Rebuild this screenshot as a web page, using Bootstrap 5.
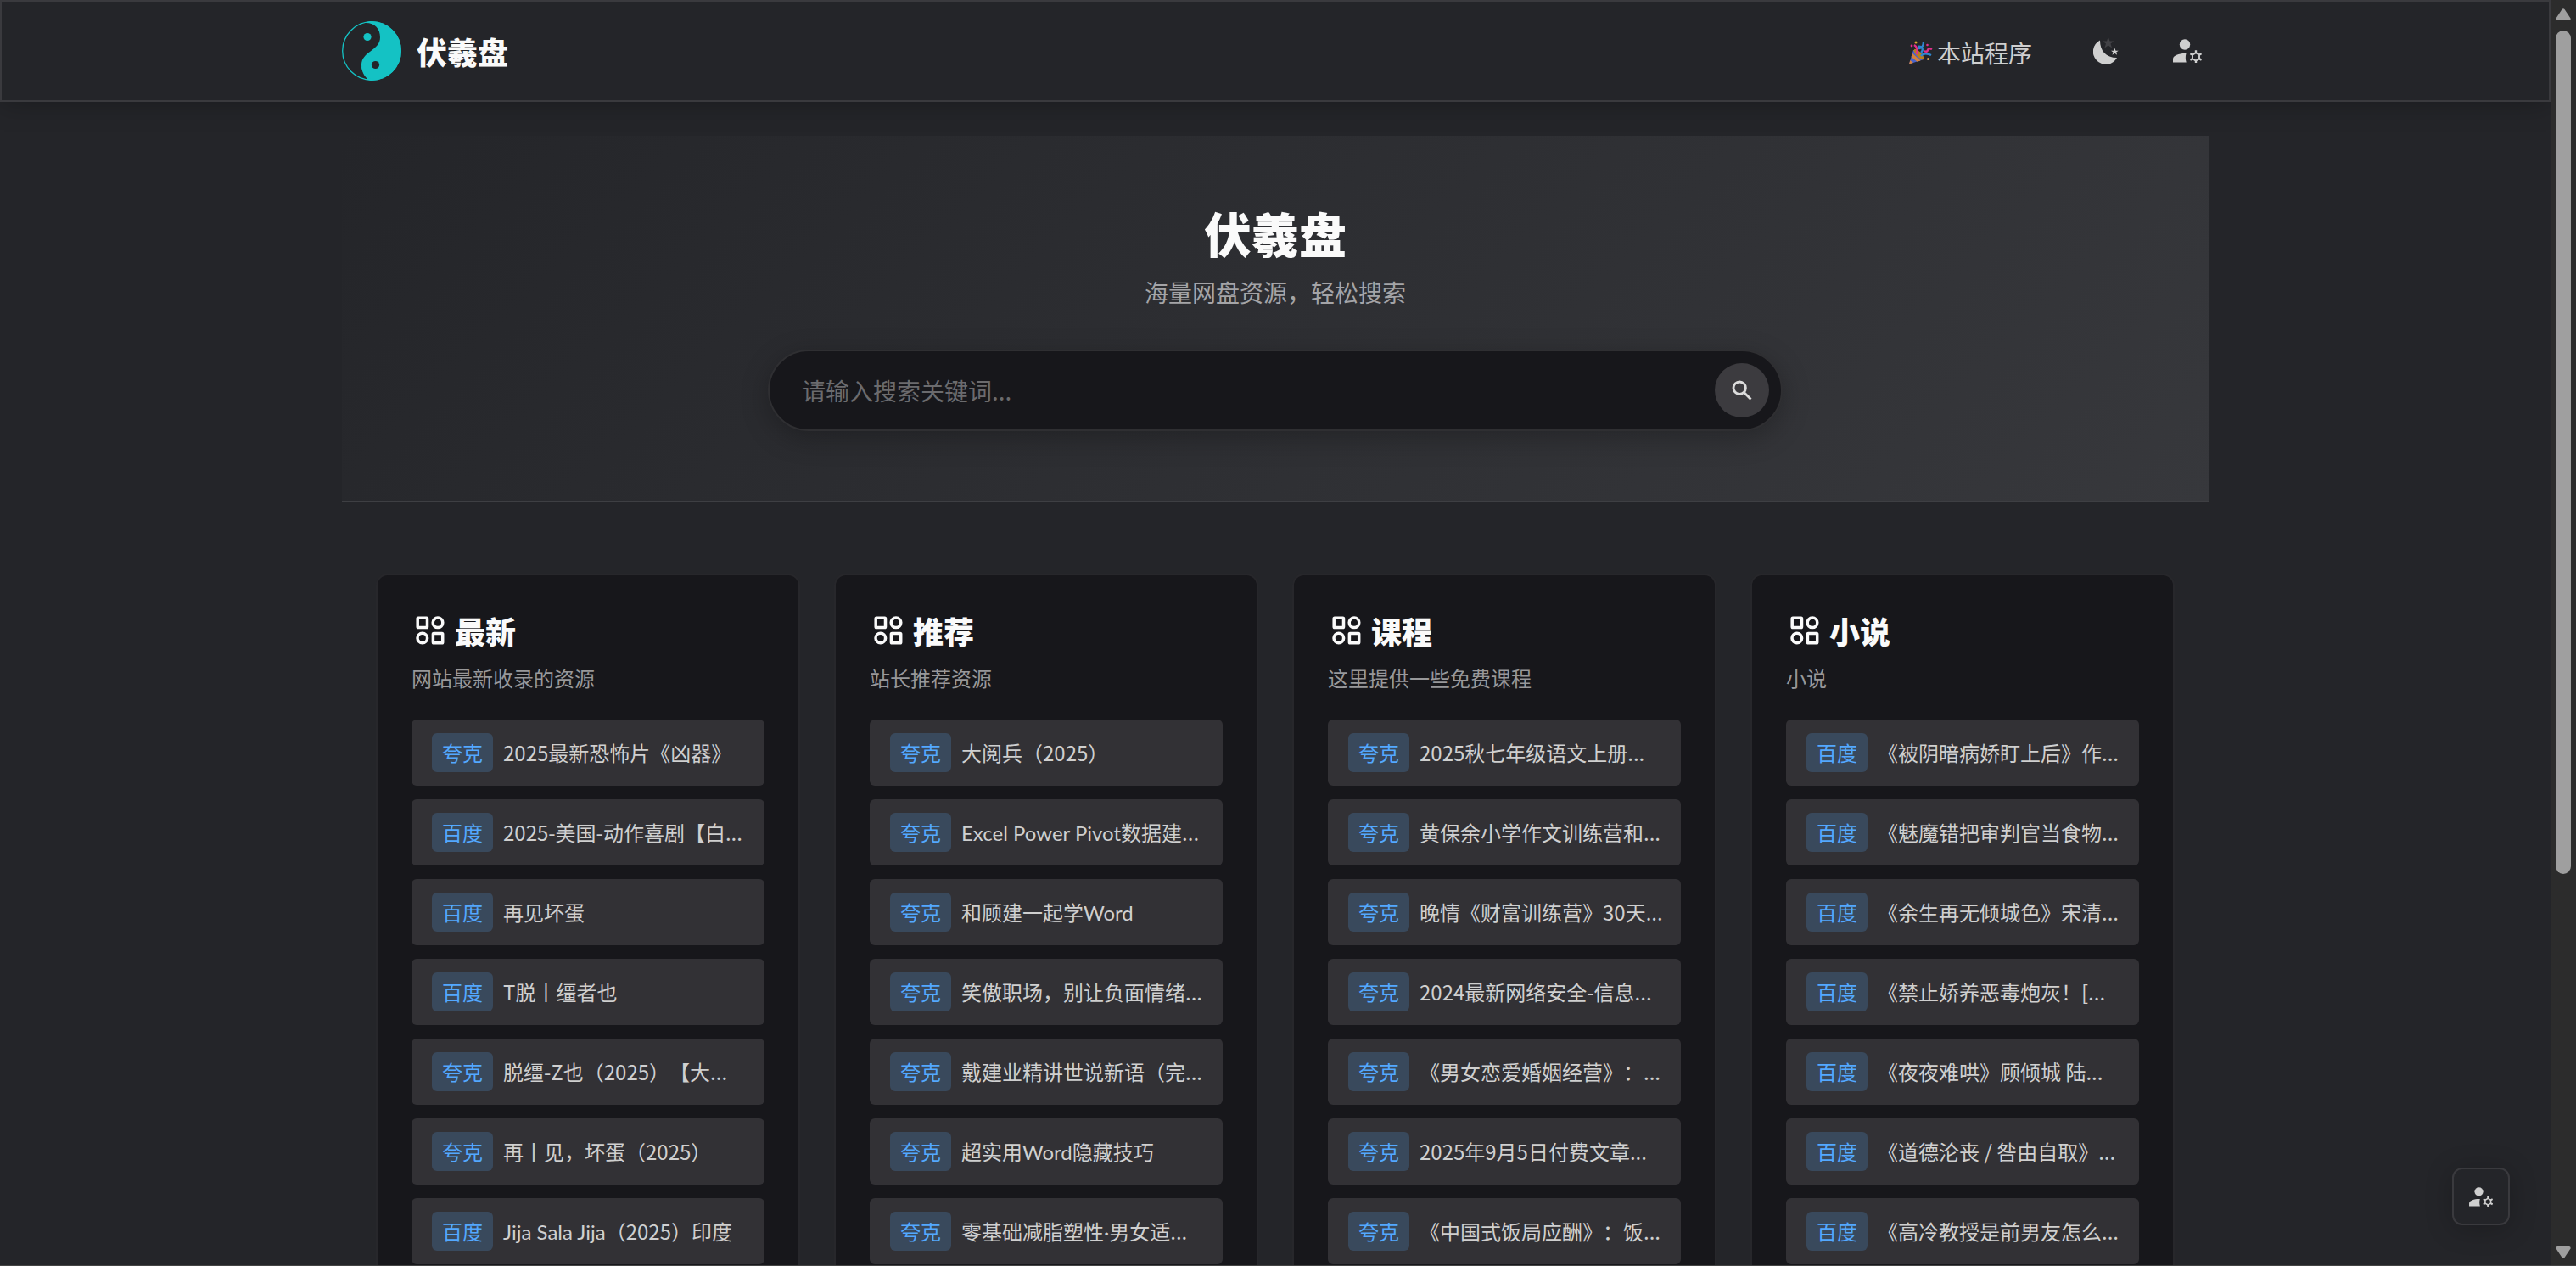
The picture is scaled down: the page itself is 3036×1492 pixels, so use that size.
<!DOCTYPE html>
<html lang="zh-CN" data-bs-theme="dark">
<head>
<meta charset="utf-8">
<meta name="viewport" content="width=device-width, initial-scale=1">
<title>伏羲盘</title>
<link href="https://cdn.jsdelivr.net/npm/bootstrap@5.3.0/dist/css/bootstrap.min.css" rel="stylesheet">
<style>
  :root { --line: #3a3a3e; --page: #242529; --panel: #17171b; --ink: #cfcfcf; }
  body { background: var(--page); color: var(--ink); font-family: "Noto Sans CJK SC", sans-serif; font-size: 24px; text-spacing-trim: space-all; }
  a { color: inherit; text-decoration: none; }
  .shell { border-bottom: 1px solid #444; }
  .wrap { max-width: 2200px; }
  .topbar { height: 120px; border: 2px solid var(--line); background: var(--page); box-shadow: 0 0 32px rgba(0,0,0,.3); z-index: 2; }
  .brand-link { gap: 18px; }
  .brand-name { font-size: 36px; font-weight: 900; line-height: 52px; color: #fafafa; }
  .top-link { font-size: 28px; line-height: 40px; gap: 5px; padding-top: 4px; }
  .top-nav { padding-right: 8px; }
  .top-tools { gap: 60px; margin-left: 72px; }
  .icon-btn { background: none; border: 0; padding: 0; color: var(--ink); line-height: 0; }
  .hero { margin-top: 40px; padding: 80px 0 82px; border-bottom: 2px solid #3e3f43; background: linear-gradient(135deg, #242529, #37383c); text-align: center; }
  .hero h1 { font-size: 56px; font-weight: 900; line-height: 68px; margin-bottom: 16px; color: #fafafa; }
  .hero p { font-size: 28px; line-height: 40px; margin-bottom: 48px; color: #a4a4a7; }
  .search { max-width: 1196px; height: 96px; border: 2px solid #2f2f32; border-radius: 48px; background: var(--panel); padding: 0 14px 0 38px; box-shadow: 0 8px 32px rgba(0,0,0,.25); }
  .search input { background: none; border: 0; outline: 0; font-size: 28px; color: var(--ink); padding: 0; }
  .search input::placeholder { color: #6b6b6e; opacity: 1; }
  .search button { width: 64px; height: 64px; border: 0; border-radius: 50%; background: #3c3b3f; color: #dcdcdc; padding: 0; }
  .boards { --bs-gutter-x: 40px; }
  .boards-wrap { padding: 84px 40px 0; }
  .board { background: var(--panel); border: 2px solid #27272b; border-radius: 14px; padding: 40px; }
  .board h2 { font-size: 36px; font-weight: 900; line-height: 50px; margin-bottom: 12px; color: #fafafa; gap: 12px; padding-left: 5px; }
  .board p { line-height: 38px; margin-bottom: 30px; color: #98989a; }
  .entries { gap: 16px; }
  .entry { background: #323135; border-radius: 6px; padding: 16px 24px; gap: 12px; line-height: 38px; white-space: nowrap; }
  .entry b { font-weight: 400; color: #53a8ff; background: #39495c; border-radius: 6px; padding: 4px 12px; }
  .latin { font-family: Lato, "Noto Sans CJK SC", sans-serif; }
  .float-btn { position: absolute; right: 48px; bottom: 47px; width: 68px; height: 68px; border: 2px solid var(--line); border-radius: 12px; background: var(--page); color: var(--ink); padding: 0; box-shadow: 0 4px 32px rgba(0,0,0,.22); }
  .scroll { width: 30px; background: #2c2c2c; padding: 10px 6px 8px; gap: 12px; }
  .scroll i { height: 994px; border-radius: 9px; background: #9f9f9f; margin-bottom: auto; }
</style>
<script src="https://cdn.jsdelivr.net/npm/bootstrap@5.3.0/dist/js/bootstrap.bundle.min.js"></script>
</head>
<body class="vh-100 overflow-hidden">
<svg width="0" height="0" class="position-absolute" aria-hidden="true">
  <symbol id="user-gear" viewBox="0 0 34 28">
    <g fill="currentColor"><circle cx="14" cy="6.5" r="6.2"/>
    <path d="M0 27.500V23.500C0 19.500 7 17 14 17H15.500C14.500 20.500 14.700 24 15.700 27.500Z"/></g>
    <g fill="none" stroke="currentColor" stroke-width="2"><path stroke-width="1.900" d="M27 16.200 31 18.600V23.200L27 25.600 23 23.200V18.600Z"/>
    <path stroke-width="2.400" d="M27 13.200V17M27 25V28.500M20.400 17.200 23.600 19M30.400 22.900 33.600 24.700M20.400 24.700 23.600 22.900M30.400 19 33.600 17.200"/></g>
  </symbol>
  <symbol id="shapes" viewBox="0 0 34 34">
    <g fill="none" stroke="currentColor" stroke-width="3.500"><rect x="2.200" y="2.200" width="11.300" height="11.300" rx=".8"/><circle cx="26" cy="7.800" r="5.800"/><circle cx="7.800" cy="26" r="5.800"/><rect x="20.400" y="20.400" width="11.300" height="11.300" rx=".8"/></g>
  </symbol>
</svg>
<div class="shell d-flex h-100">
  <div class="flex-grow-1 overflow-hidden position-relative">
    <header class="topbar position-relative d-flex align-items-center">
      <div class="wrap w-100 mx-auto d-flex align-items-center justify-content-between">
        <a href="#" class="brand-link d-flex align-items-center">
          <svg width="70" height="70" viewBox="0 0 70 70"><circle cx="35" cy="35" r="34.300" fill="none" stroke="#14c2c4" stroke-width="1.300"/>
            <path fill="#14c2c4" d="M26 2C30 .500 32 0 35 0A35 35 0 0 1 35 70C28 69 23 60 23 52C23 35 45 35 45 19C45 8 38 1 26 2Z"/><path fill="#14c2c4" d="M23 52C23 61 29 67 38 68L35 70 30 69Z"/><circle cx="30" cy="18.500" r="4.600" fill="#14c2c4"/><circle cx="39.500" cy="51.500" r="4.600" fill="#242529"/></svg>
          <span class="brand-name">伏羲盘</span>
        </a>
        <nav class="top-nav d-flex align-items-center">
          <a href="#" class="top-link d-flex align-items-center">
            <svg width="28" height="28" viewBox="0 0 28 28"><path d="M0 27.500 5 11Q12 13 17.500 22Z" fill="#4a63c8"/><path d="M0 27.500 1.300 23 5 26ZM2.600 19 4 15 13.500 23.500 9.500 24.800Z" fill="#d9823b"/><path d="M5 11Q15 12 17.500 22L14 21Q9 17 5 11Z" fill="#d99a25"/><ellipse cx="11.500" cy="16" rx="3" ry="8" transform="rotate(-43 11.500 16)" fill="#b97d1e"/><g fill="none" stroke-width="2.400"><path d="M6 5Q11 8 9 16" stroke="#e0308c"/><path d="M17 1Q17 8 12 9Q10 5 15 8Q17 11 14 14" stroke="#2f86d0"/><path d="M14 18Q18 13 26 17" stroke="#2f86d0"/><path d="M18 12Q21 14 22 11T27 10" stroke="#e0308c"/></g><circle cx="8" cy="2" r="1.500" fill="#d9a92f"/><circle cx="3" cy="6" r="1.400" fill="#e0308c"/><circle cx="21.500" cy="5" r="1.300" fill="#e0308c"/><circle cx="22.500" cy="21.500" r="1.500" fill="#d9a04f"/></svg>
            本站程序</a>
          <div class="top-tools d-flex align-items-center">
            <button class="icon-btn" aria-label="切换主题"><svg width="34" height="34" viewBox="0 0 34 34"><path fill="currentColor" d="M8 4.500C8 17 15 25 28 25A15 15 0 1 1 8 4.500Z"/><path fill="#424246" d="M17.700.500 19.500 5.500H24.500L20.500 8.600 22 13.500 17.700 10.500 13.400 13.500 15 8.600 11 5.500H16Z"/><path fill="currentColor" d="M25.300 13.700 26.500 16.700H29.700L27.200 18.600 28.100 21.700 25.300 19.800 22.500 21.700 23.400 18.600 21 16.700H24.200Z"/></svg></button>
            <button class="icon-btn" aria-label="用户设置"><svg width="34" height="28"><use href="#user-gear"/></svg></button>
          </div>
        </nav>
      </div>
    </header>
    <main>
      <section class="hero wrap mx-auto">
        <h1>伏羲盘</h1>
        <p>海量网盘资源，轻松搜索</p>
        <form class="search mx-auto d-flex align-items-center">
          <input type="text" class="flex-grow-1" placeholder="请输入搜索关键词..." aria-label="搜索关键词">
          <button type="button" class="d-flex align-items-center justify-content-center" aria-label="搜索"><svg width="24" height="24" viewBox="0 0 24 24" fill="none" stroke="currentColor" stroke-width="2.800"><circle cx="9.200" cy="9.200" r="7.200"/><path d="M14.500 14.500 22.500 22.500"/></svg></button>
        </form>
      </section>
      <section class="boards-wrap wrap mx-auto">
        <div class="row row-cols-4 boards">
          <div class="col"><div class="board">
            <h2 class="d-flex align-items-center"><svg width="34" height="34"><use href="#shapes"/></svg>最新</h2>
            <p>网站最新收录的资源</p>
            <div class="entries d-flex flex-column">
              <a href="#" class="entry d-flex"><b>夸克</b><span class="pt-1">2025最新恐怖片《凶器》</span></a>
              <a href="#" class="entry d-flex"><b>百度</b><span class="pt-1">2025-美国-动作喜剧【白...</span></a>
              <a href="#" class="entry d-flex"><b>百度</b><span class="pt-1">再见坏蛋</span></a>
              <a href="#" class="entry d-flex"><b>百度</b><span class="pt-1">T脱丨缰者也</span></a>
              <a href="#" class="entry d-flex"><b>夸克</b><span class="pt-1">脱缰-Z也（2025）【大...</span></a>
              <a href="#" class="entry d-flex"><b>夸克</b><span class="pt-1">再丨见，坏蛋（2025）</span></a>
              <a href="#" class="entry d-flex"><b>百度</b><span class="pt-1"><span class="latin">Jija Sala Jija</span>（2025）印度</span></a>
            </div></div></div>
          <div class="col"><div class="board">
            <h2 class="d-flex align-items-center"><svg width="34" height="34"><use href="#shapes"/></svg>推荐</h2>
            <p>站长推荐资源</p>
            <div class="entries d-flex flex-column">
              <a href="#" class="entry d-flex"><b>夸克</b><span class="pt-1">大阅兵（2025）</span></a>
              <a href="#" class="entry d-flex"><b>夸克</b><span class="pt-1"><span class="latin">Excel Power Pivot</span>数据建...</span></a>
              <a href="#" class="entry d-flex"><b>夸克</b><span class="pt-1">和顾建一起学<span class="latin">Word</span></span></a>
              <a href="#" class="entry d-flex"><b>夸克</b><span class="pt-1">笑傲职场，别让负面情绪...</span></a>
              <a href="#" class="entry d-flex"><b>夸克</b><span class="pt-1">戴建业精讲世说新语（完...</span></a>
              <a href="#" class="entry d-flex"><b>夸克</b><span class="pt-1">超实用<span class="latin">Word</span>隐藏技巧</span></a>
              <a href="#" class="entry d-flex"><b>夸克</b><span class="pt-1">零基础减脂塑性<span class="latin">·</span>男女适...</span></a>
            </div></div></div>
          <div class="col"><div class="board">
            <h2 class="d-flex align-items-center"><svg width="34" height="34"><use href="#shapes"/></svg>课程</h2>
            <p>这里提供一些免费课程</p>
            <div class="entries d-flex flex-column">
              <a href="#" class="entry d-flex"><b>夸克</b><span class="pt-1">2025秋七年级语文上册...</span></a>
              <a href="#" class="entry d-flex"><b>夸克</b><span class="pt-1">黄保余小学作文训练营和...</span></a>
              <a href="#" class="entry d-flex"><b>夸克</b><span class="pt-1">晚情《财富训练营》30天...</span></a>
              <a href="#" class="entry d-flex"><b>夸克</b><span class="pt-1">2024最新网络安全-信息...</span></a>
              <a href="#" class="entry d-flex"><b>夸克</b><span class="pt-1">《男女恋爱婚姻经营》：...</span></a>
              <a href="#" class="entry d-flex"><b>夸克</b><span class="pt-1">2025年9月5日付费文章...</span></a>
              <a href="#" class="entry d-flex"><b>夸克</b><span class="pt-1">《中国式饭局应酬》：饭...</span></a>
            </div></div></div>
          <div class="col"><div class="board">
            <h2 class="d-flex align-items-center"><svg width="34" height="34"><use href="#shapes"/></svg>小说</h2>
            <p>小说</p>
            <div class="entries d-flex flex-column">
              <a href="#" class="entry d-flex"><b>百度</b><span class="pt-1">《被阴暗病娇盯上后》作...</span></a>
              <a href="#" class="entry d-flex"><b>百度</b><span class="pt-1">《魅魔错把审判官当食物...</span></a>
              <a href="#" class="entry d-flex"><b>百度</b><span class="pt-1">《余生再无倾城色》宋清...</span></a>
              <a href="#" class="entry d-flex"><b>百度</b><span class="pt-1">《禁止娇养恶毒炮灰！[...</span></a>
              <a href="#" class="entry d-flex"><b>百度</b><span class="pt-1">《夜夜难哄》顾倾城 陆...</span></a>
              <a href="#" class="entry d-flex"><b>百度</b><span class="pt-1">《道德沦丧 / 咎由自取》...</span></a>
              <a href="#" class="entry d-flex"><b>百度</b><span class="pt-1">《高冷教授是前男友怎么...</span></a>
            </div></div></div>
        </div>
      </section>
    </main>
    <button class="float-btn d-flex align-items-center justify-content-center" aria-label="管理"><svg width="28" height="23"><use href="#user-gear"/></svg></button>
  </div>
  <div class="scroll flex-shrink-0 d-flex flex-column" aria-hidden="true">
    <svg width="18" height="14" viewBox="0 0 18 14"><path d="M7.500 1Q9 -.500 10.500 1L17.500 11.500Q18 14 16 14H2Q0 14 .500 11.500Z" fill="#9f9f9f"/></svg>
    <i></i>
    <svg width="18" height="14" viewBox="0 0 18 14"><path d="M7.500 13Q9 14.500 10.500 13L17.500 2.500Q18 0 16 0H2Q0 0 .500 2.500Z" fill="#9f9f9f"/></svg>
  </div>
</div>
</body>
</html>
